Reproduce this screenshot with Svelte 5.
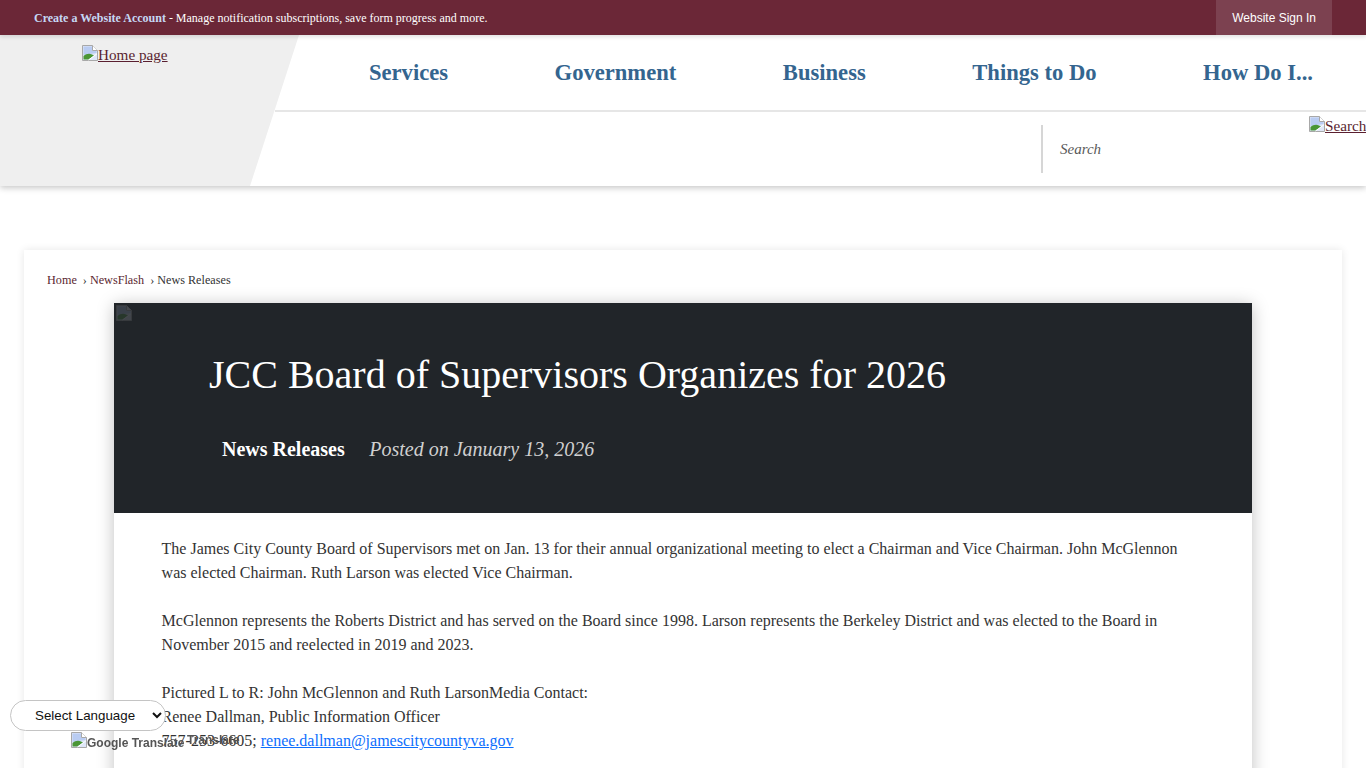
<script>
	let navItems = ['Services', 'Government', 'Business', 'Things to Do', 'How Do I...']
</script>

{#snippet brokenImg(dark)}
	<svg class="broken" class:dark width="16" height="16" viewBox="0 0 16 16" aria-hidden="true">
		<path d="M0.5 0.5H10.5L15.5 5.5V15.5H0.5Z" fill="#dfe7f8" stroke="#a8a8a8"/>
		<path d="M10.5 0.5V5.5H15.5" fill="#fff" stroke="#a8a8a8"/>
		<path d="M1.5 1.5H10V6H14.5V8L1.5 10Z" fill="#b9ccf2"/>
		<path d="M1.5 14.5V11C4 9 7 8 10 9.5L12 10.5L6.5 14.5Z" fill="#4a9636"/>
		<path d="M6.5 15L15 8.8" stroke="#fff" stroke-width="1"/>
	</svg>
{/snippet}

<div class="topbar">
	<p class="notice"><a href="#account">Create a Website Account</a> - Manage notification subscriptions, save form progress and more.</p>
	<a class="signin" href="#signin">Website Sign In</a>
</div>

<header>
	<div class="logo">
		<a href="#home">{@render brokenImg(false)}Home page</a>
	</div>
	<div class="headerRight">
		<nav>
			{#each navItems as item}
				<a href="#nav">{item}</a>
			{/each}
		</nav>
		<div class="searchRow">
			<div class="search">Search</div>
			<a class="searchBtn" href="#search">{@render brokenImg(false)}Search</a>
		</div>
	</div>
</header>

<main>
	<div class="card">
		<div class="crumbs">
			<a href="#home">Home</a>
			<span class="sep">›</span><a href="#news">NewsFlash</a>
			<span class="sep">›</span><span>News Releases</span>
		</div>
		<article>
			<div class="hero">
				<span class="heroImg">{@render brokenImg(true)}</span>
				<h1>JCC Board of Supervisors Organizes for 2026</h1>
				<div class="meta">
					<strong>News Releases</strong>
					<em>Posted on January 13, 2026</em>
				</div>
			</div>
			<div class="body">
				<p>The James City County Board of Supervisors met on Jan. 13 for their annual organizational meeting to elect a Chairman and Vice Chairman. John McGlennon was elected Chairman. Ruth Larson was elected Vice Chairman.</p>
				<p>McGlennon represents the Roberts District and has served on the Board since 1998. Larson represents the Berkeley District and was elected to the Board in November 2015 and reelected in 2019 and 2023.</p>
				<p>Pictured L to R: John McGlennon and Ruth LarsonMedia Contact:<br>
				Renee Dallman, Public Information Officer<br>
				757-253-6605; <a href="mailto:renee.dallman@jamescitycountyva.gov">renee.dallman@jamescitycountyva.gov</a></p>
			</div>
		</article>
	</div>
</main>

<div class="translate">
	<select>
		<option>Select Language</option>
	</select>
	<div class="gt">{@render brokenImg(false)}Google Translate<span class="over">Translate</span></div>
</div>

<style>
	:global(html), :global(body) {
		margin: 0;
		height: 100%;
		overflow: hidden;
	}
	:global(body) {
		font-family: "Liberation Serif", "Times New Roman", serif;
		background: #fff;
		color: #222;
	}
	a {
		color: #5a1f30;
	}
	.broken {
		vertical-align: baseline;
		margin-bottom: -1px;
	}
	.broken.dark {
		opacity: 0.16;
	}

	.topbar {
		height: 35px;
		background: #6b2737;
		display: flex;
		align-items: center;
		justify-content: space-between;
		padding: 0 34px;
		position: relative;
		z-index: 3;
		box-shadow: 0 2px 4px rgba(0, 0, 0, 0.12);
	}
	.notice {
		margin: 2px 0 0;
		font-size: 12px;
		color: #fff;
		font-weight: 400;
	}
	.notice a {
		color: #c6d8f5;
		font-weight: 700;
		text-decoration: none;
	}
	.signin {
		height: 35px;
		padding: 0 16px;
		background: #7c4150;
		color: #fff;
		font: 12px/36px "Liberation Sans", Arial, sans-serif;
		text-decoration: none;
	}

	header {
		height: 151px;
		display: flex;
		position: relative;
		z-index: 2;
		background: #fff;
		box-shadow: 0 2px 6px rgba(0, 0, 0, 0.22);
	}
	.logo {
		position: absolute;
		left: 0;
		top: 0;
		width: 299px;
		height: 151px;
		background: #efefef;
		clip-path: polygon(0 0, 100% 0, 250px 100%, 0 100%);
		font-size: 15.2px;
		box-sizing: border-box;
		padding: 10px 0 0 82px;
	}
	.headerRight {
		margin-left: 275px;
		flex: 1;
		min-width: 0;
		display: flex;
		flex-direction: column;
	}
	nav {
		height: 77px;
		border-bottom: 2px solid #e6e6e6;
		box-sizing: border-box;
		display: flex;
		justify-content: space-between;
		align-items: center;
		padding: 0 53px 0 94px;
	}
	nav a {
		color: #34658f;
		font-size: 22.6px;
		font-weight: 700;
		text-decoration: none;
	}
	.searchRow {
		flex: 1;
		display: flex;
		justify-content: flex-end;
		position: relative;
	}
	.search {
		position: absolute;
		left: 766px;
		top: 13px;
		height: 48px;
		width: 300px;
		border-left: 2px solid #d6d6d6;
		box-sizing: border-box;
		padding-left: 17px;
		line-height: 48px;
		font-size: 15px;
		font-style: italic;
		color: #595959;
	}
	.searchBtn {
		font-size: 15.2px;
		position: absolute;
		left: 1034px;
		top: 4px;
		white-space: nowrap;
	}

	main {
		padding: 64px 24px 0;
	}
	.card {
		background: #fff;
		box-shadow: 0 0 8px rgba(0, 0, 0, 0.1);
		padding: 22px 90px 40px;
		position: relative;
	}
	.crumbs {
		margin-left: -67px;
		font-size: 12.2px;
		height: 31px;
		line-height: 16px;
		color: #333;
	}
	.crumbs a {
		text-decoration: none;
	}
	.sep {
		margin-left: 3px;
		margin-right: 3px;
	}
	article {
		box-shadow: 0 2px 16px rgba(0, 0, 0, 0.25);
	}
	.hero {
		height: 210px;
		background: #212529;
		position: relative;
		box-sizing: border-box;
		padding: 48px 95px 0;
		color: #fff;
	}
	.heroImg {
		position: absolute;
		left: 2px;
		top: 2px;
	}
	h1 {
		margin: 0;
		font-size: 40px;
		font-weight: 400;
		line-height: 48px;
	}
	.meta {
		margin-top: 38px;
		padding-left: 13px;
		font-size: 20px;
		line-height: 24px;
		display: flex;
		gap: 24.5px;
	}
	.meta em {
		color: #d0d0d0;
	}
	.body {
		padding: 24px 48px 60px 47.6px;
		font-size: 16px;
		line-height: 24px;
		color: #333;
		background: #fff;
	}
	.body p {
		margin: 0 0 24px;
	}
	.body a {
		color: #0d6efd;
	}

	.translate {
		position: fixed;
		left: 10px;
		top: 700px;
		z-index: 5;
	}
	select {
		width: 156px;
		height: 31px;
		border: 1px solid #c4c4c4;
		border-radius: 16px;
		background: #fff;
		font: 13.33px "Liberation Sans", Arial, sans-serif;
		color: #111;
		padding-left: 20px;
		display: block;
	}
	.gt {
		margin: 1px 0 0 61px;
		font: 700 12px/16px "Liberation Sans", Arial, sans-serif;
		color: #555;
		white-space: nowrap;
		position: relative;
	}
	.over {
		position: absolute;
		left: 116px;
		top: 0;
	}
</style>
